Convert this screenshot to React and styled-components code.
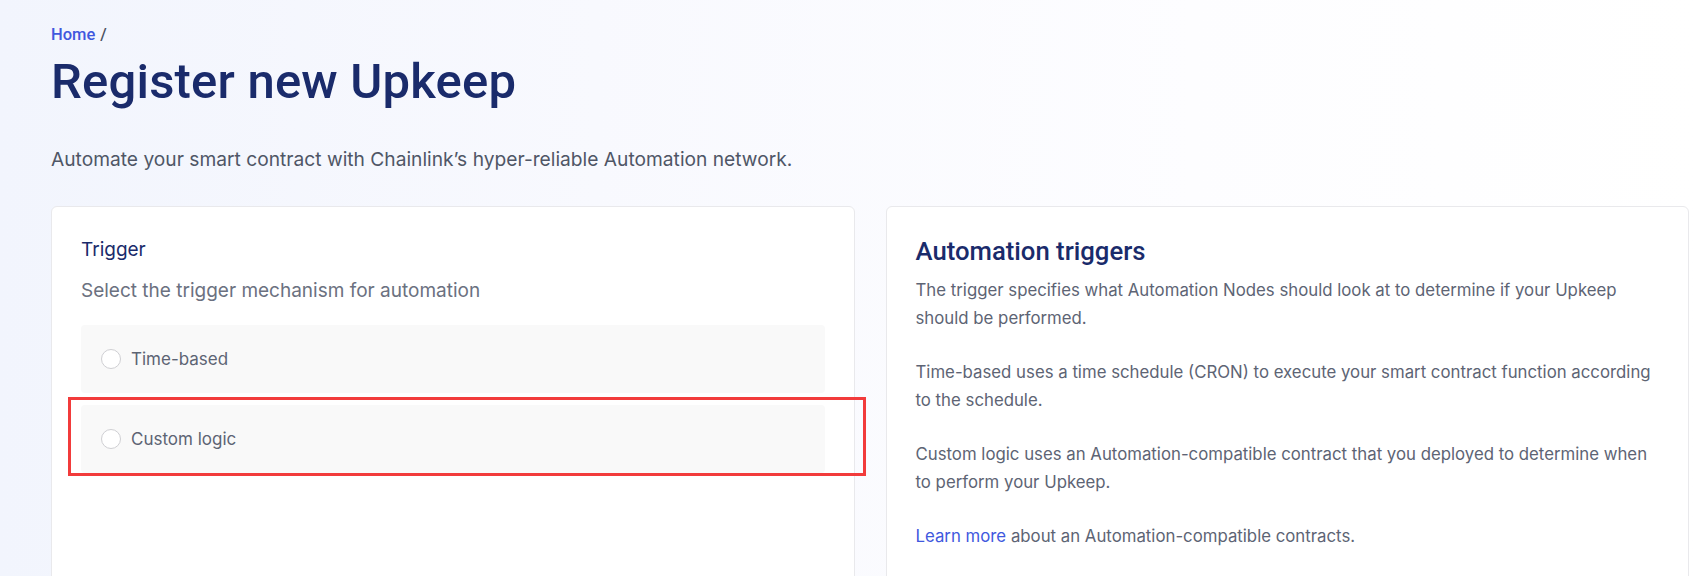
import React from "react";
import styled, { createGlobalStyle } from "styled-components";

const Global = createGlobalStyle`
  html, body { margin: 0; padding: 0; }
  body {
    font-family: Inter, "Liberation Sans", Arial, sans-serif;
    background: linear-gradient(90deg, #f2f5fd 0%, #f8f9fe 35%, #fdfdff 70%, #ffffff 100%);
    min-height: 576px;
    overflow: hidden;
  }
`;

const Page = styled.main`
  padding: 23px 12px 0 51px;
`;

const Breadcrumb = styled.nav`
  font-family: Roboto, "Liberation Sans", sans-serif;
  font-size: 16.5px;
  line-height: 24px;
  color: #4a5160;
  font-weight: 500;
`;

const Crumb = styled.a`
  color: #4058de;
  text-decoration: none;
  margin-right: 5px;
`;

const Title = styled.h1`
  margin: 7px 0 0;
  font-family: Roboto, "Liberation Sans", sans-serif;
  font-size: 49px;
  line-height: 56px;
  font-weight: 500;
  color: #1a2b6b;
  letter-spacing: 0.2px;
`;

const Lead = styled.p`
  margin: 35px 0 0;
  font-size: 19.2px;
  line-height: 28px;
  color: #4f5666;
`;

const Columns = styled.div`
  display: grid;
  grid-template-columns: 1fr 1fr;
  gap: 31px;
  margin-top: 33px;
`;

const Card = styled.section`
  background: #ffffff;
  border: 1px solid #e9e9ec;
  border-radius: 6px;
  padding: 29px 29px 0;
  min-height: 420px;
`;

const FieldLabel = styled.h2`
  margin: 0;
  font-size: 19px;
  line-height: 28px;
  font-weight: 400;
  color: #1a2b6b;
`;

const FieldHint = styled.p`
  margin: 13px 0 0;
  font-size: 19px;
  line-height: 28px;
  color: #6b7180;
`;

const Options = styled.div`
  display: flex;
  flex-direction: column;
  gap: 12px;
  margin-top: 20px;
`;

const Option = styled.label`
  position: relative;
  display: flex;
  align-items: center;
  gap: 10px;
  height: 68px;
  padding: 0 20px;
  background: #f9f9f9;
  border-radius: 4px;
  font-size: 17px;
  color: #5d6474;
  cursor: pointer;
`;

const Radio = styled.span`
  width: 20px;
  height: 20px;
  box-sizing: border-box;
  border-radius: 50%;
  border: 1px solid #cfcfd3;
  background: #ffffff;
  flex: none;
`;

const Highlight = styled.span`
  position: absolute;
  top: -8px;
  bottom: -3px;
  left: -13px;
  right: -41px;
  border: 3px solid #f23b3b;
  pointer-events: none;
`;

const InfoTitle = styled.h2`
  margin: 0;
  font-family: Roboto, "Liberation Sans", sans-serif;
  font-size: 25.7px;
  line-height: 30px;
  font-weight: 500;
  color: #1a2b6b;
`;

const InfoText = styled.p`
  margin: 10px 0 26px;
  font-size: 16.8px;
  line-height: 28px;
  color: #5d6474;
  & + & { margin-top: 0; }
`;

const Link = styled.a`
  color: #4058de;
  text-decoration: none;
`;

const options = [
  { id: "time", label: "Time-based" },
  { id: "custom", label: "Custom logic", highlighted: true },
];

export default function App() {
  return (
    <>
      <Global />
      <Page>
        <Breadcrumb>
          <Crumb href="#">Home</Crumb>/
        </Breadcrumb>
        <Title>Register new Upkeep</Title>
        <Lead>Automate your smart contract with Chainlink’s hyper-reliable Automation network.</Lead>
        <Columns>
          <Card>
            <FieldLabel>Trigger</FieldLabel>
            <FieldHint>Select the trigger mechanism for automation</FieldHint>
            <Options>
              {options.map((o) => (
                <Option key={o.id}>
                  <Radio />
                  {o.label}
                  {o.highlighted && <Highlight />}
                </Option>
              ))}
            </Options>
          </Card>
          <Card>
            <InfoTitle>Automation triggers</InfoTitle>
            <InfoText>
              The trigger specifies what Automation Nodes should look at to determine if your Upkeep should be performed.
            </InfoText>
            <InfoText>
              Time-based uses a time schedule (CRON) to execute your smart contract function according to the schedule.
            </InfoText>
            <InfoText>
              Custom logic uses an Automation-compatible contract that you deployed to determine when to perform your Upkeep.
            </InfoText>
            <InfoText>
              <Link href="#">Learn more</Link> about an Automation-compatible contracts.
            </InfoText>
          </Card>
        </Columns>
      </Page>
    </>
  );
}
